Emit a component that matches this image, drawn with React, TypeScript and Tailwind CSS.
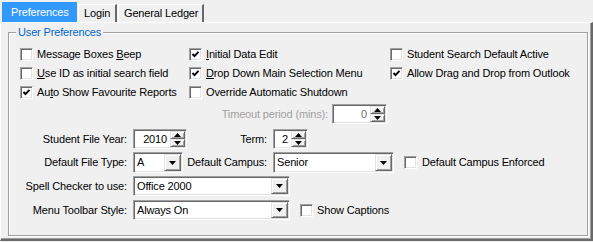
import React from 'react';

const FONT = "font-['Liberation_Sans',Arial,sans-serif]";

// Underline the access key of a caption (Windows style)
const Caption: React.FC<{ text: string; accel?: number }> = ({ text, accel }) => {
  if (accel === undefined) return <span>{text}</span>;
  return (
    <span>
      {text.slice(0, accel)}
      <span className="underline underline-offset-[1px]">{text[accel]}</span>
      {text.slice(accel + 1)}
    </span>
  );
};

const CheckBox: React.FC<{ checked?: boolean; label: string; accel?: number; gap?: string }> = ({
  checked,
  label,
  accel,
  gap = 'gap-[4px]',
}) => (
  <div className={`flex items-center ${gap} whitespace-nowrap`}>
    <div className="w-[13px] h-[13px] shrink-0 bg-white border border-t-[#a0a0a0] border-l-[#a0a0a0] border-b-white border-r-white shadow-[inset_1px_1px_0_#696969,inset_-1px_-1px_0_#e3e3e3] flex items-center justify-center">
      {checked && (
        <svg width="9" height="9" viewBox="0 0 9 9">
          <polyline points="1.5,4 3.5,6.2 7.5,1.8" fill="none" stroke="#000" strokeWidth="1.9" />
        </svg>
      )}
    </div>
    <Caption text={label} accel={accel} />
  </div>
);

const Sunken: React.FC<{ className?: string; children?: React.ReactNode }> = ({ className = '', children }) => (
  <div
    className={`flex items-stretch bg-white border border-t-[#a0a0a0] border-l-[#a0a0a0] border-b-white border-r-white shadow-[inset_1px_1px_0_#696969,inset_-1px_-1px_0_#e3e3e3] p-[1px] ${className}`}
  >
    {children}
  </div>
);

const Arrow: React.FC<{ up?: boolean }> = ({ up }) => (
  <svg width="7" height="4" viewBox="0 0 7 4">
    {up ? <polygon points="0,4 7,4 3.5,0" fill="#000" /> : <polygon points="0,0 7,0 3.5,4" fill="#000" />}
  </svg>
);

const RaisedBtn: React.FC<{ className?: string; children?: React.ReactNode }> = ({ className = '', children }) => (
  <div
    className={`flex items-center justify-center bg-[#f0f0f0] border border-t-[#e3e3e3] border-l-[#e3e3e3] border-b-[#696969] border-r-[#696969] shadow-[inset_1px_1px_0_#fff,inset_-1px_-1px_0_#a0a0a0] ${className}`}
  >
    {children}
  </div>
);

const SpinBox: React.FC<{ value: string; width: string; disabled?: boolean }> = ({ value, width, disabled }) => (
  <Sunken className={`${width} h-[20px]`}>
    <div className={`flex-1 flex items-center justify-end pr-[3px] ${disabled ? 'text-[#6d6d6d]' : 'text-black'}`}>
      {value}
    </div>
    <div className="flex flex-col w-[15px]">
      <RaisedBtn className="flex-1">
        <Arrow up />
      </RaisedBtn>
      <RaisedBtn className="flex-1">
        <Arrow />
      </RaisedBtn>
    </div>
  </Sunken>
);

const Combo: React.FC<{ value: string; width: string; height?: string }> = ({ value, width, height = 'h-[20px]' }) => (
  <Sunken className={`${width} ${height}`}>
    <div className="flex-1 flex items-center pl-[2px] whitespace-nowrap overflow-hidden">{value}</div>
    <RaisedBtn className="w-[17px]">
      <Arrow />
    </RaisedBtn>
  </Sunken>
);

const Tab: React.FC<{ label: string; active?: boolean; width: string }> = ({ label, active, width }) =>
  active ? (
    <div className={`${width} h-[20px] bg-[#3399ff] text-white flex items-center pl-[9px] whitespace-nowrap`}>
      {label}
    </div>
  ) : (
    <div
      className={`${width} h-[18px] flex items-center pl-[5px] whitespace-nowrap border-t border-l border-t-white border-l-white border-r-2 border-r-[#696969]`}
    >
      {label}
    </div>
  );

export default function App() {
  return (
    <div
      className={`w-[593px] h-[242px] bg-[#f0f0f0] text-[11px] leading-[13px] tracking-[-0.15px] text-black ${FONT}`}
    >
      {/* Tab strip */}
      <div className="h-[22px] flex items-end pl-[2px] gap-[1px]">
        <Tab label="Preferences" active width="w-[75px]" />
        <Tab label="Login" width="w-[39px]" />
        <Tab label="General Ledger" width="w-[86px]" />
      </div>

      {/* Page */}
      <div className="h-[219px] border-t border-l border-t-white border-l-white border-r-2 border-b-2 border-r-[#696969] border-b-[#696969] shadow-[inset_-1px_-1px_0_#a0a0a0] pt-[9px] pl-[7px] pr-[3px]">
        {/* Group box */}
        <div className="relative h-[204px] border border-[#a0a0a0] shadow-[inset_1px_1px_0_#fff,1px_1px_0_#fff] pt-[12px] pl-[11px]">
          <span className="absolute -top-[7px] left-[7px] px-[2px] bg-[#f0f0f0] text-[#0066cc]">User Preferences</span>

          <div className="grid grid-cols-[169px_201px_1fr] auto-rows-[19px] items-center">
            <CheckBox label="Message Boxes Beep" accel={14} />
            <CheckBox label="Initial Data Edit" checked accel={0} />
            <CheckBox label="Student Search Default Active" />
            <CheckBox label="Use ID as initial search field" accel={0} />
            <CheckBox label="Drop Down Main Selection Menu" checked accel={0} />
            <CheckBox label="Allow Drag and Drop from Outlook" checked />
            <CheckBox label="Auto Show Favourite Reports" checked accel={2} />
            <CheckBox label="Override Automatic Shutdown" />
          </div>

          <div className="flex items-center h-[20px] mt-[2px]">
            <div className="w-[308px] text-right text-[#a0a0a0]">Timeout period (mins):</div>
            <div className="ml-[4px]">
              <SpinBox value="0" width="w-[55px]" disabled />
            </div>
          </div>

          <div className="flex items-center h-[20px] mt-[5px]">
            <div className="w-[107px] text-right">Student File Year:</div>
            <div className="ml-[6px]">
              <SpinBox value="2010" width="w-[54px]" />
            </div>
            <div className="w-[80px] text-right">Term:</div>
            <div className="ml-[6px]">
              <SpinBox value="2" width="w-[35px]" />
            </div>
          </div>

          <div className="flex items-center h-[21px] mt-[3px]">
            <div className="w-[107px] text-right">Default File Type:</div>
            <div className="ml-[6px]">
              <Combo value="A" width="w-[50px]" height="h-[21px]" />
            </div>
            <div className="w-[84px] text-right">Default Campus:</div>
            <div className="ml-[6px]">
              <Combo value="Senior" width="w-[121px]" height="h-[21px]" />
            </div>
            <div className="ml-[10px]">
              <CheckBox label="Default Campus Enforced" gap="gap-[5px]" />
            </div>
          </div>

          <div className="flex items-center h-[20px] mt-[3px]">
            <div className="w-[107px] text-right">Spell Checker to use:</div>
            <div className="ml-[6px]">
              <Combo value="Office 2000" width="w-[157px]" />
            </div>
          </div>

          <div className="flex items-center h-[20px] mt-[4px]">
            <div className="w-[107px] text-right">Menu Toolbar Style:</div>
            <div className="ml-[6px]">
              <Combo value="Always On" width="w-[157px]" />
            </div>
            <div className="ml-[10px]">
              <CheckBox label="Show Captions" />
            </div>
          </div>
        </div>
      </div>
    </div>
  );
}
